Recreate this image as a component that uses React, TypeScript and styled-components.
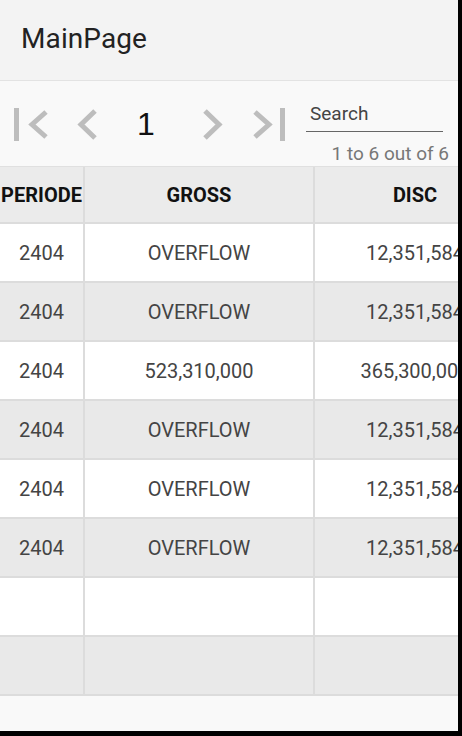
import React from "react";
import styled, { createGlobalStyle } from "styled-components";

const Global = createGlobalStyle`
  html, body { margin: 0; padding: 0; background: #000; }
  body { font-family: Roboto, "Liberation Sans", sans-serif; }
  * { box-sizing: border-box; }
`;

const Screen = styled.div`
  width: 458px;
  height: 731px;
  background: #f9f9f9;
  display: flex;
  flex-direction: column;
  overflow: hidden;
`;

const TitleBar = styled.header`
  height: 81px;
  flex: 0 0 81px;
  background: #f3f3f3;
  border-bottom: 1px solid #e3e3e3;
  box-shadow: 0 1px 1px rgba(0, 0, 0, 0.04);
  display: flex;
  align-items: center;
  padding-left: 21px;
  padding-bottom: 4px;
`;

const Title = styled.h1`
  margin: 0;
  font-size: 28px;
  font-weight: 400;
  color: #222;
  letter-spacing: 0.1px;
`;

const Pager = styled.div`
  height: 85px;
  flex: 0 0 85px;
  display: flex;
  align-items: stretch;
  background: #f9f9f9;
`;

const Slot = styled.button<{ $w: number }>`
  width: ${(p) => p.$w}px;
  flex: 0 0 ${(p) => p.$w}px;
  border: 0;
  padding: 0;
  background: transparent;
  display: flex;
  align-items: center;
  justify-content: center;
  padding-top: 1px;
`;

const PageNumber = styled.span`
  font-size: 32px;
  color: #111;
  line-height: 1;
`;

const SearchBlock = styled.div`
  flex: 1;
  margin-left: 12px;
  padding-top: 19px;
  padding-right: 9px;
  display: flex;
  flex-direction: column;
`;

const SearchInput = styled.input`
  width: 137px;
  height: 32px;
  border: 0;
  border-bottom: 1.5px solid #666;
  background: transparent;
  padding: 0 0 4px 4px;
  font-family: Roboto, "Liberation Sans", sans-serif;
  font-size: 19px;
  color: #333;
  outline: none;
  &::placeholder { color: #444; }
`;

const Count = styled.div`
  margin-top: 11px;
  text-align: right;
  font-size: 19px;
  color: #777;
  line-height: 22px;
`;

const Table = styled.div`
  width: 458px;
  overflow: hidden;
  border-top: 1px solid #e0e0e0;
`;

const Row = styled.div<{ $h: number }>`
  display: grid;
  grid-template-columns: 83px 228px 200px;
  column-gap: 2px;
  height: ${(p) => p.$h}px;
  background: #dcdcdc;
  border-bottom: 2px solid #dcdcdc;
  width: max-content;
`;

const HeadCell = styled.div`
  background: #ebebeb;
  display: flex;
  align-items: center;
  justify-content: center;
  font-size: 20px;
  font-weight: 700;
  color: #111;
  white-space: nowrap;
  overflow: visible;
`;

const Cell = styled.div<{ $alt: boolean }>`
  background: ${(p) => (p.$alt ? "#e9e9e9" : "#ffffff")};
  display: flex;
  align-items: center;
  justify-content: center;
  font-size: 20px;
  color: #444;
  white-space: nowrap;
`;

const Footer = styled.div`
  flex: 1;
  background: #f9f9f9;
`;

const stroke = "#bdbdbd";

const FirstIcon = () => (
  <svg width="34" height="33" viewBox="0 0 34 33">
    <rect x="0" y="0" width="5" height="33" fill={stroke} />
    <polyline points="32,4 18,16.5 32,29" fill="none" stroke={stroke} strokeWidth="5" />
  </svg>
);
const PrevIcon = () => (
  <svg width="20" height="33" viewBox="0 0 20 33">
    <polyline points="18,3 4,16.5 18,30" fill="none" stroke={stroke} strokeWidth="5" />
  </svg>
);
const NextIcon = () => (
  <svg width="20" height="33" viewBox="0 0 20 33">
    <polyline points="2,3 16,16.5 2,30" fill="none" stroke={stroke} strokeWidth="5" />
  </svg>
);
const LastIcon = () => (
  <svg width="34" height="33" viewBox="0 0 34 33">
    <polyline points="2,4 16,16.5 2,29" fill="none" stroke={stroke} strokeWidth="5" />
    <rect x="27" y="0" width="5" height="33" fill={stroke} />
  </svg>
);

const rows = [
  ["2404", "OVERFLOW", "12,351,584"],
  ["2404", "OVERFLOW", "12,351,584"],
  ["2404", "523,310,000", "365,300,000"],
  ["2404", "OVERFLOW", "12,351,584"],
  ["2404", "OVERFLOW", "12,351,584"],
  ["2404", "OVERFLOW", "12,351,584"],
  ["", "", ""],
  ["", "", ""],
];

export default function App() {
  return (
    <Screen>
      <Global />
      <TitleBar>
        <Title>MainPage</Title>
      </TitleBar>
      <Pager>
        <Slot $w={62}><FirstIcon /></Slot>
        <Slot $w={50}><PrevIcon /></Slot>
        <Slot $w={68}><PageNumber>1</PageNumber></Slot>
        <Slot $w={65}><NextIcon /></Slot>
        <Slot $w={49}><LastIcon /></Slot>
        <SearchBlock>
          <SearchInput placeholder="Search" />
          <Count>1 to 6 out of 6</Count>
        </SearchBlock>
      </Pager>
      <Table>
        <Row $h={57}>
          <HeadCell>PERIODE</HeadCell>
          <HeadCell>GROSS</HeadCell>
          <HeadCell>DISC</HeadCell>
        </Row>
        {rows.map((r, i) => (
          <Row $h={59} key={i}>
            {r.map((v, j) => (
              <Cell $alt={i % 2 === 1} key={j}>{v}</Cell>
            ))}
          </Row>
        ))}
      </Table>
      <Footer />
    </Screen>
  );
}
